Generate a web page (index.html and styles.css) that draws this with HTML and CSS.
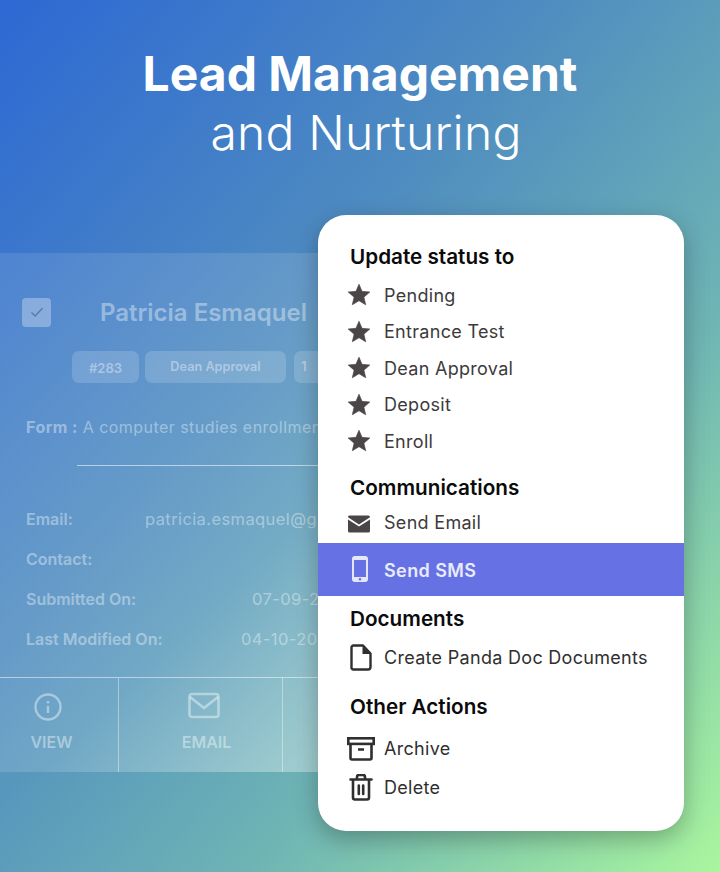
FILE: index.html
```html
<!DOCTYPE html>
<html lang="en">
<head>
    <meta charset="UTF-8">
    <meta name="viewport" content="width=device-width, initial-scale=1.0">
    <title>Lead Management and Nurturing</title>
    <link rel="stylesheet" href="styles.css">
</head>
<body>
    <div class="stage">
        <header class="hero">
            <h1>Lead Management</h1>
            <p>and Nurturing</p>
        </header>

        <!-- faded lead card behind the menu -->
        <section class="lead-card">
            <div class="lead-top">
                <span class="lead-check">
                    <svg width="16" height="16" viewBox="0 0 16 16" fill="none" stroke="currentColor" stroke-width="1.4"><path d="M2.5 8.5l3.6 3.4 7.4-7.6"/></svg>
                </span>
                <h2>Patricia Esmaquel</h2>
            </div>
            <div class="lead-tags">
                <span class="tag tag-id">#283</span>
                <span class="tag tag-status">Dean Approval</span>
                <span class="tag tag-count">1</span>
            </div>
            <p class="lead-form"><b>Form :</b> A computer studies enrollment form</p>
            <div class="lead-rule"></div>
            <dl class="lead-info">
                <div class="info-row"><dt>Email:</dt><dd class="info-email">patricia.esmaquel@gmail.com</dd></div>
                <div class="info-row"><dt>Contact:</dt><dd></dd></div>
                <div class="info-row"><dt>Submitted On:</dt><dd class="info-sub">07-09-2021</dd></div>
                <div class="info-row"><dt>Last Modified On:</dt><dd class="info-mod">04-10-2021</dd></div>
            </dl>
            <div class="lead-actions">
                <div class="lead-action action-view">
                    <svg class="info-outline" width="30" height="30" viewBox="0 0 30 30" fill="none" stroke="currentColor" stroke-width="2.4"><circle cx="15" cy="15" r="12.5"/><path d="M15 14v7M15 9v2.6"/></svg>
                    <span>VIEW</span>
                </div>
                <div class="lead-action action-email">
                    <svg class="mail-outline" width="32" height="28" viewBox="0 0 32 28" fill="none" stroke="currentColor" stroke-width="2.6"><rect x="1.5" y="2" width="29" height="23" rx="2.5"/><path d="M2 5l14 11L30 5"/></svg>
                    <span>EMAIL</span>
                </div>
            </div>
        </section>

        <div class="menu">
            <h3 class="menu-title">Update status to</h3>
            <ul class="status-list">
                <li class="menu-item"><svg class="star" viewBox="0 0 24 24"><path d="M12 2l2.810 6.630 7.190.610-5.460 4.730L18.180 21 12 17.270 5.820 21l1.640-7.030L2 9.240l7.190-.610z"/></svg>Pending</li>
                <li class="menu-item"><svg class="star" viewBox="0 0 24 24"><path d="M12 2l2.810 6.630 7.190.610-5.460 4.730L18.180 21 12 17.270 5.820 21l1.640-7.030L2 9.240l7.190-.610z"/></svg>Entrance Test</li>
                <li class="menu-item"><svg class="star" viewBox="0 0 24 24"><path d="M12 2l2.810 6.630 7.190.610-5.460 4.730L18.180 21 12 17.270 5.820 21l1.640-7.030L2 9.240l7.190-.610z"/></svg>Dean Approval</li>
                <li class="menu-item"><svg class="star" viewBox="0 0 24 24"><path d="M12 2l2.810 6.630 7.190.610-5.460 4.730L18.180 21 12 17.270 5.820 21l1.640-7.030L2 9.240l7.190-.610z"/></svg>Deposit</li>
                <li class="menu-item"><svg class="star" viewBox="0 0 24 24"><path d="M12 2l2.810 6.630 7.190.610-5.460 4.730L18.180 21 12 17.270 5.820 21l1.640-7.030L2 9.240l7.190-.610z"/></svg>Enroll</li>
            </ul>

            <h3 class="menu-title title-comm">Communications</h3>
            <div class="menu-item item-email">
                <svg class="icon" viewBox="0 0 24 18"><path d="M1 4.400V16a1.600 1.600 0 0 0 1.600 1.600h18.800A1.600 1.600 0 0 0 23 16V4.400l-11 7.200z" fill="#4a4648"/><path d="M1 2.200A1.600 1.600 0 0 1 2.600 .4h18.800A1.600 1.600 0 0 1 23 2.200L12 9.400z" fill="#4a4648"/></svg>
                Send Email
            </div>
            <div class="menu-item item-sms">
                <svg class="icon icon-sms" width="16" height="26" viewBox="0 0 16 26"><path fill-rule="evenodd" d="M3 0h10a3 3 0 0 1 3 3v20a3 3 0 0 1-3 3H3a3 3 0 0 1-3-3V3a3 3 0 0 1 3-3zM2 4v17h12V4zM8 22a1.300 1.300 0 1 0 0 2.600A1.300 1.300 0 0 0 8 22z" fill="#e4e6fb"/></svg>
                Send SMS
            </div>

            <h3 class="menu-title title-docs">Documents</h3>
            <div class="menu-item item-doc">
                <svg class="icon" width="22" height="27" viewBox="0 0 22 27" fill="none" stroke="#2f2f2f" stroke-width="2.400" stroke-linejoin="round"><path d="M3.500 1.500h9.500l7.500 8v13.500a2.500 2.500 0 0 1-2.500 2.500H3.500a2 2 0 0 1-2-2.500V3.500a2 2 0 0 1 2-2z"/><path d="M12.500 2v8h8" fill="#2f2f2f" stroke-width="0"/></svg>
                Create Panda Doc Documents
            </div>

            <h3 class="menu-title title-other">Other Actions</h3>
            <div class="menu-item item-archive">
                <svg class="icon" width="28" height="24" viewBox="0 0 28 24" fill="none" stroke="#2f2f2f" stroke-width="2.600"><rect x="1.300" y="1.300" width="25.400" height="5.600"/><path d="M3.500 7v14a1.500 1.500 0 0 0 1.500 1.500h18a1.500 1.500 0 0 0 1.500-1.500V7M11 12.500h6"/></svg>
                Archive
            </div>
            <div class="menu-item item-delete">
                <svg class="icon" width="24" height="27" viewBox="0 0 24 27" fill="none" stroke="#2f2f2f" stroke-width="2.600" stroke-linecap="round"><path d="M1.500 5.500h21M4 6v17.500a2 2 0 0 0 2 2h12a2 2 0 0 0 2-2V6M8 5V3a2 2 0 0 1 2-2h4a2 2 0 0 1 2 2v2M9.800 11.500v8.500M14.200 11.500v8.500"/></svg>
                Delete
            </div>
        </div>
    </div>
</body>
</html>
```

FILE: styles.css
```css
* {
    box-sizing: border-box;
}

body {
    margin: 0;
    font-family: Inter, "Noto Sans", sans-serif;
}

.stage {
    position: relative;
    width: 720px;
    height: 872px;
    overflow: hidden;
    color: #fff;
    background: linear-gradient(130deg, #2d68d4 0%, #4f8cc0 38%, #6fb5b4 68%, #a9f69e 100%);
}

/* heading */
.hero {
    height: 253px;
    padding-top: 44px;
    text-align: center;
}
.hero h1 {
    margin: 0;
    font-size: 48px;
    line-height: 60px;
    font-weight: 700;
}
.hero p {
    margin: 0;
    padding-left: 12px;
    font-size: 48px;
    line-height: 57px;
    font-weight: 300;
    letter-spacing: 0.2px;
}

/* faded card */
.lead-card {
    width: 420px;
    height: 519px;
    padding-top: 44px;
    color: rgba(255, 255, 255, 0.4);
    background: linear-gradient(135deg, rgba(255,255,255,0.1), rgba(255,255,255,0.14) 60%, rgba(255,255,255,0.45));
}
.lead-top {
    display: flex;
    align-items: center;
    height: 30px;
    padding-left: 22px;
}
.lead-check {
    display: flex;
    align-items: center;
    justify-content: center;
    width: 29px;
    height: 29px;
    border-radius: 4px;
    color: #62779f;
    background: rgba(255, 255, 255, 0.3);
}
.lead-top h2 {
    margin: 0 0 0 49px;
    font-size: 24px;
    font-weight: 600;
    white-space: nowrap;
}
.lead-tags {
    display: flex;
    gap: 6px;
    margin: 24px 0 0 72px;
    font-size: 12.700px;
    font-weight: 600;
}
.tag {
    height: 32px;
    border-radius: 7px;
    line-height: 31px;
    text-align: center;
    background: rgba(255, 255, 255, 0.16);
}
.tag-id {
    width: 67px;
    font-size: 13px;
    line-height: 34px;
}
.tag-status {
    width: 141px;
}
.tag-count {
    width: 40px;
    margin-left: 2px;
    padding-right: 20px;
}
.lead-form {
    margin: 33px 0 0 26px;
    font-size: 16px;
    line-height: 22px;
    letter-spacing: 0.45px;
    white-space: nowrap;
}
.lead-rule {
    width: 343px;
    height: 1px;
    margin: 27px 0 0 77px;
    background: rgba(255, 255, 255, 0.55);
}
.lead-info {
    margin: 33px 0 0 26px;
}
.info-row {
    display: flex;
    height: 40px;
    font-size: 16px;
    line-height: 40px;
    white-space: nowrap;
}
.info-row dt {
    width: 119px;
    font-weight: 600;
    flex: none;
}
.info-row dd {
    margin: 0;
    font-size: 16.500px;
    font-weight: 400;
    letter-spacing: 0.4px;
}
.info-sub {
    padding-left: 107px;
}
.info-mod {
    padding-left: 96px;
}
.lead-actions {
    display: flex;
    height: 95px;
    margin-top: 18px;
    border-top: 1px solid rgba(255, 255, 255, 0.5);
}
.lead-action {
    display: flex;
    flex-direction: column;
    align-items: center;
    width: 119px;
    padding-top: 14px;
    font-size: 16px;
    font-weight: 600;
    color: rgba(255, 255, 255, 0.42);
    border-right: 1px solid rgba(255, 255, 255, 0.4);
}
.lead-action span {
    margin-top: 10px;
}
.action-view {
    padding-right: 15px;
}
.info-outline {
    margin-left: -7px;
}
.action-email {
    width: 164px;
    padding-left: 12px;
}
.action-email span {
    margin-top: 12px;
}
.mail-outline {
    margin-left: -6px;
}

/* popup menu */
.menu {
    position: absolute;
    top: 215px;
    left: 318px;
    width: 366px;
    height: 616px;
    padding-top: 29px;
    border-radius: 28px;
    color: #3d3a3c;
    background: #fff;
    box-shadow: 0 8px 24px rgba(0, 0, 0, 0.28);
}
.menu-title {
    margin: 0 0 0 32px;
    font-size: 20.700px;
    line-height: 26px;
    font-weight: 600;
    color: #0b0b0b;
}
.status-list {
    margin: 7px 0 0;
    padding: 0;
    list-style: none;
}
.status-list .menu-item {
    height: 36.500px;
    gap: 12px;
    padding-left: 28px;
}
.menu-item {
    display: flex;
    align-items: center;
    gap: 13px;
    padding-left: 29px;
    font-size: 18px;
    letter-spacing: 0.3px;
    white-space: nowrap;
}
.star {
    width: 26px;
    height: 26px;
    fill: #4a4648;
    stroke: #4a4648;
    stroke-width: 0.6;
    stroke-linejoin: round;
}
.icon {
    flex: none;
}
.title-comm {
    margin-top: 15px;
}
.item-email {
    height: 30px;
    margin-top: 7px;
}
.item-email .icon {
    width: 24px;
    height: 18px;
    margin-top: 2px;
}
.item-sms {
    height: 53px;
    margin-top: 5px;
    padding-left: 34px;
    padding-top: 2px;
    gap: 16px;
    font-weight: 600;
    color: #e9ebfd;
    background: #6672e4;
    letter-spacing: 0.4px;
}
.item-sms .icon {
    margin-top: -2px;
}
.title-docs {
    margin-top: 10px;
}
.item-doc {
    height: 30px;
    margin-top: 11px;
    padding-left: 32px;
    gap: 12px;
    color: #2f2f2f;
}
.title-other {
    margin-top: 21px;
}
.item-archive {
    height: 30px;
    margin-top: 14px;
    padding-left: 29px;
    gap: 9px;
    color: #2f2f2f;
}
.item-delete {
    height: 30px;
    margin-top: 9px;
    padding-left: 31px;
    gap: 11px;
    color: #2f2f2f;
}
```
